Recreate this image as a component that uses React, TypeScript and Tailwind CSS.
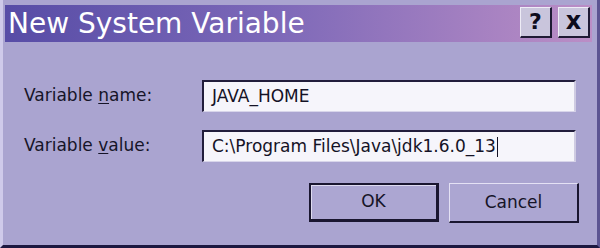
import React from 'react';

const font = { fontFamily: '"DejaVu Sans", sans-serif' };

function TitleButton({ children }: { children: React.ReactNode }) {
  return (
    <div className="w-[32px] h-[31px] flex items-center justify-center bg-[#c9c5dc] border-t border-l border-t-[#eeecf6] border-l-[#eeecf6] border-b-2 border-r-2 border-b-[#1e1a34] border-r-[#1e1a34] text-[22px] font-bold text-[#0d0b1c] leading-none">
      {children}
    </div>
  );
}

function Field({ value, caret }: { value: string; caret?: boolean }) {
  return (
    <div className="h-[32px] bg-[#f6f5fb] border-t-2 border-l-2 border-t-[#221d3c] border-l-[#221d3c] border-b border-r-2 border-b-[#d8d5ea] border-r-[#cfcbe2] flex items-center pl-[8px] text-[17px] text-[#141226]">
      <span>{value}</span>
      {caret && <span className="w-[1px] h-[20px] bg-[#141226] ml-[1px]" />}
    </div>
  );
}

export default function App() {
  return (
    <div
      className="w-[600px] h-[248px] bg-[#aaa4d0] flex flex-col border-l-[3px] border-l-[#cfcaea] border-r-[3px] border-r-[#5c5492] border-b-[3px] border-b-[#1c1840]"
      style={font}
    >
      {/* Title bar */}
      <div className="mt-[5px] ml-[2px] mr-[5px] h-[37px] flex items-start justify-between pt-[2px] pr-[2px] bg-[linear-gradient(to_right,#574ca6,#7c68b8_45%,#bb8ec6)]">
        <span className="text-[28px] text-white leading-[33px] pl-[3px]">New System Variable</span>
        <div className="flex gap-[6px]">
          <TitleButton>?</TitleButton>
          <TitleButton>
            <span className="text-[24px] -mt-[3px]">x</span>
          </TitleButton>
        </div>
      </div>

      {/* Body */}
      <div className="pl-[21px] pt-[38px] flex flex-col w-[577px]">
        <div className="grid grid-cols-[178px_374px] gap-y-[18px] items-center text-[17px] text-[#161428]">
          <span>
            Variable <span className="underline underline-offset-2">n</span>ame:
          </span>
          <Field value="JAVA_HOME" />
          <span>
            Variable <span className="underline underline-offset-2">v</span>alue:
          </span>
          <Field value="C:\Program Files\Java\jdk1.6.0_13" caret />
        </div>

        <div className="flex justify-end gap-[10px] mt-[21px] pr-[1px] text-[17px] text-[#161428]">
          <div className="w-[130px] h-[39px] flex items-center justify-center bg-[#aca6d2] border-2 border-[#1a1630] border-b-[3px] border-r-[3px] shadow-[inset_1px_1px_0_#dedbf0]">
            OK
          </div>
          <div className="w-[130px] h-[40px] flex items-center justify-center bg-[#aca6d2] border-t border-l border-t-[#e4e1f4] border-l-[#e4e1f4] border-b-2 border-r-2 border-b-[#1a1630] border-r-[#1a1630]">
            Cancel
          </div>
        </div>
      </div>
    </div>
  );
}
